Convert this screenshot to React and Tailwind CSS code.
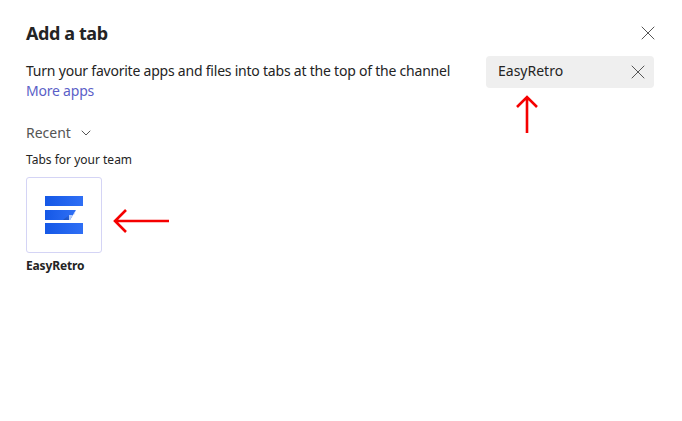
import { X, ChevronDown } from "lucide-react";

function RetroLogo() {
  return (
    <svg width="38" height="38" viewBox="0 0 38 38">
      <defs>
        <linearGradient id="bar" x1="0" y1="0" x2="1" y2="0">
          <stop offset="0" stopColor="#1558e6" />
          <stop offset="1" stopColor="#2f6ff5" />
        </linearGradient>
        <linearGradient id="shade" x1="0" y1="1" x2="1" y2="0">
          <stop offset="0" stopColor="#1d4fb8" />
          <stop offset="1" stopColor="#1d4fb8" stopOpacity="0.2" />
        </linearGradient>
      </defs>
      <rect x="0" y="0" width="38" height="10" fill="url(#bar)" />
      <path d="M0 14H31L25 24H0Z" fill="url(#bar)" />
      <path d="M24 19H28L25 24H24Z" fill="#b4cbfb" />
      <path d="M28 19L31 14L29 19Z" fill="#b4cbfb" />
      <path d="M18 24L24 19V24Z" fill="url(#shade)" />
      <rect x="0" y="27" width="38" height="11" fill="url(#bar)" />
    </svg>
  );
}

export default function App() {
  return (
    <div className="relative h-[421px] w-[682px] overflow-hidden bg-white pl-[26px] pr-[28px] pt-[21px] text-[#242424] font-['Noto_Sans',sans-serif]">
      <div className="flex items-center justify-between">
        <h1 className="text-[18px] leading-6 font-bold tracking-[-0.4px]">Add a tab</h1>
        <X className="-mr-[6px] text-[#555]" size={24} strokeWidth={1} />
      </div>

      <div className="mt-[11px] flex items-start justify-between">
        <div className="pt-[5px] text-[14px] leading-5 tracking-[-0.22px]">
          <p>Turn your favorite apps and files into tabs at the top of the channel</p>
          <p className="text-[#5b5fc7]">More apps</p>
        </div>
        <div className="flex h-8 w-[168px] items-center justify-between rounded bg-[#efefef] pl-3 pr-1 text-[14px]">
          <span className="pb-[3px]">EasyRetro</span>
          <X className="text-[#555]" size={24} strokeWidth={1} />
        </div>
      </div>

      <div className="mt-[22px] flex items-center gap-[7px] text-[14px] leading-5 text-[#555]">
        <span>Recent</span>
        <ChevronDown size={16} strokeWidth={1.5} />
      </div>

      <p className="mt-[9px] text-[12px] leading-4">Tabs for your team</p>

      <div className="mt-[9px] flex h-[76px] w-[76px] items-center justify-center rounded-[3px] border border-[#d4d4f5]">
        <RetroLogo />
      </div>
      <p className="mt-[5px] text-[12px] leading-4 font-bold tracking-[-0.15px]">EasyRetro</p>

      <svg className="absolute left-[112px] top-[207px]" width="58" height="28" viewBox="0 0 58 28" fill="none">
        <path d="M57 14H3M14 3L3 14L14 25" stroke="#f50000" strokeWidth="2.6" />
      </svg>
      <svg className="absolute left-[514px] top-[94px]" width="26" height="40" viewBox="0 0 26 40" fill="none">
        <path d="M13 39V3M3 13L13 3L23 13" stroke="#f50000" strokeWidth="2.6" />
      </svg>
    </div>
  );
}
